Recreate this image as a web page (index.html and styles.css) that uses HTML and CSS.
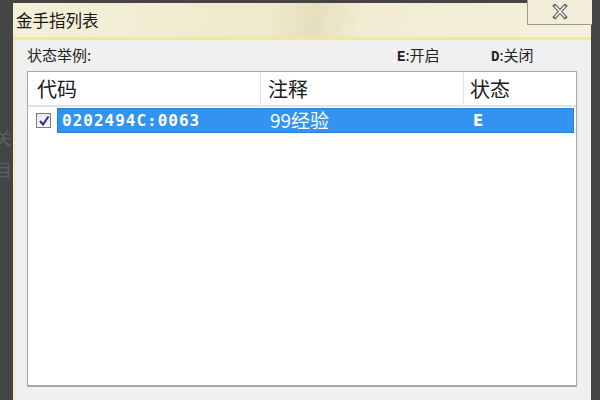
FILE: index.html
```html
<!DOCTYPE html>
<html>
<head>
<meta charset="utf-8">
<link rel="stylesheet" href="styles.css">
</head>
<body>
<div class="desk">
  <div class="bgtext">
    <span class="bg1">关</span>
    <span class="bg2">目</span>
  </div>
  <div class="win">
    <div class="titlebar">
      <span class="title">金手指列表</span>
      <div class="close">
        <svg width="22" height="16" viewBox="0 0 22 16"><path d="M6 2 L16 13 M16 2 L6 13" stroke="#6a6a6a" stroke-width="4" stroke-linecap="square"/><path d="M6 2 L16 13 M16 2 L6 13" stroke="#f4f4f4" stroke-width="1.6"/></svg>
      </div>
    </div>
    <div class="client">
      <div class="legend">
        <span class="lab">状态举例:</span>
        <span class="key k1"><b class="mono">E</b>:开启</span>
        <span class="key k2"><b class="mono">D</b>:关闭</span>
      </div>
      <div class="list">
        <div class="head">
          <div class="hc c1">代码</div>
          <div class="hc c2">注释</div>
          <div class="hc c3">状态</div>
        </div>
        <div class="row">
          <span class="chk"><svg width="12" height="12" viewBox="0 0 12 12"><path d="M2 6 L5 9.5 L10.5 1.5" stroke="#2a2f8a" stroke-width="2" fill="none"/></svg></span>
          <div class="sel">
            <span class="code">0202494C:0063</span>
            <span class="note">99经验</span>
            <span class="st">E</span>
          </div>
        </div>
      </div>
    </div>
  </div>
</div>
</body>
</html>
```
FILE: styles.css
```css
html, body {
  margin: 0;
  padding: 0;
  width: 600px;
  height: 400px;
  overflow: hidden;
  background: #454545;
  font-family: "Noto Sans CJK SC", "DejaVu Sans", sans-serif;
}
.desk {
  position: relative;
  width: 600px;
  height: 400px;
  padding: 3px 9px 0 13px;
  box-sizing: border-box;
}
.bgtext {
  position: absolute;
  left: -6px;
  top: 128px;
  display: flex;
  flex-direction: column;
  gap: 14px;
  color: #5e5e5e;
  font-size: 18px;
  line-height: 18px;
}
.win {
  position: relative;
  height: 400px;
  background: #f0f0f0;
  display: flex;
  flex-direction: column;
}
.titlebar {
  height: 34px;
  background: linear-gradient(100deg, #f4f0da 0%, #efe9cc 45%, #e6dfbd 52%, #f1ecd2 60%, #f4f0dc 100%);
  border-bottom: 3px solid #f4e79c;
  display: flex;
  align-items: flex-start;
  position: relative;
}
.title {
  margin: 7px 0 0 3px;
  font-size: 16.5px;
  line-height: 20px;
  color: #1a1a1a;
}
.close {
  position: absolute;
  right: -1px;
  top: -3px;
  width: 64px;
  height: 24px;
  border: 1px solid #9a9a90;
  border-top: none;
  border-right: none;
  background: #f1edd9;
  display: flex;
  justify-content: center;
  align-items: center;
}
.client {
  flex: 1;
  border-left: 3px solid #f3eec9;
  padding: 0 11px 0 11px;
}
.legend {
  height: 31px;
  font-size: 15px;
  line-height: 20px;
  color: #222;
  position: relative;
}
.lab { position: absolute; left: 0; top: 5px; }
.key { position: absolute; top: 5px; }
.k1 { left: 370px; }
.k2 { left: 464px; }
.mono {
  font-family: "Liberation Mono", "DejaVu Sans Mono", monospace;
  font-weight: bold;
  font-size: 14px;
}
.list {
  height: 316px;
  background: #fff;
  border: 1px solid #a8a8a8;
  border-bottom-width: 2px;
  box-sizing: border-box;
  width: 550px;
}
.head {
  display: flex;
  height: 33px;
  border-bottom: 2px solid #e4e4e4;
  background: #fff;
}
.hc {
  font-size: 20px;
  line-height: 33px;
  color: #1a1a1a;
  padding-left: 9px;
  border-right: 1px solid #e2e2e2;
  box-sizing: border-box;
}
.c1 { width: 233px; }
.c2 { width: 203px; padding-left: 7px; }
.c3 { flex: 1; border-right: none; padding-left: 6px; }
.row {
  display: flex;
  align-items: center;
  height: 25px;
  margin-top: 1px;
}
.chk {
  width: 13px;
  height: 13px;
  margin-left: 8px;
  margin-right: 6px;
  border: 1px solid #7a7a8a;
  background: linear-gradient(#e6e6ee, #fbfbfd);
  display: flex;
  align-items: center;
  justify-content: center;
}
.sel {
  flex: 1;
  height: 25px;
  margin-right: 2px;
  background: #3393f0;
  border: 1px solid #2b7fd8;
  box-sizing: border-box;
  display: flex;
  align-items: center;
  color: #fff;
  position: relative;
}
.code {
  font-family: "DejaVu Sans Mono", monospace;
  font-weight: bold;
  font-size: 16px;
  letter-spacing: 1px;
  margin-left: 4px;
  width: 208px;
}
.note {
  font-size: 19px;
  width: 203px;
  margin-top: -2px;
}
.st {
  font-family: "DejaVu Sans", sans-serif;
  font-weight: bold;
  font-size: 15px;
}
```
